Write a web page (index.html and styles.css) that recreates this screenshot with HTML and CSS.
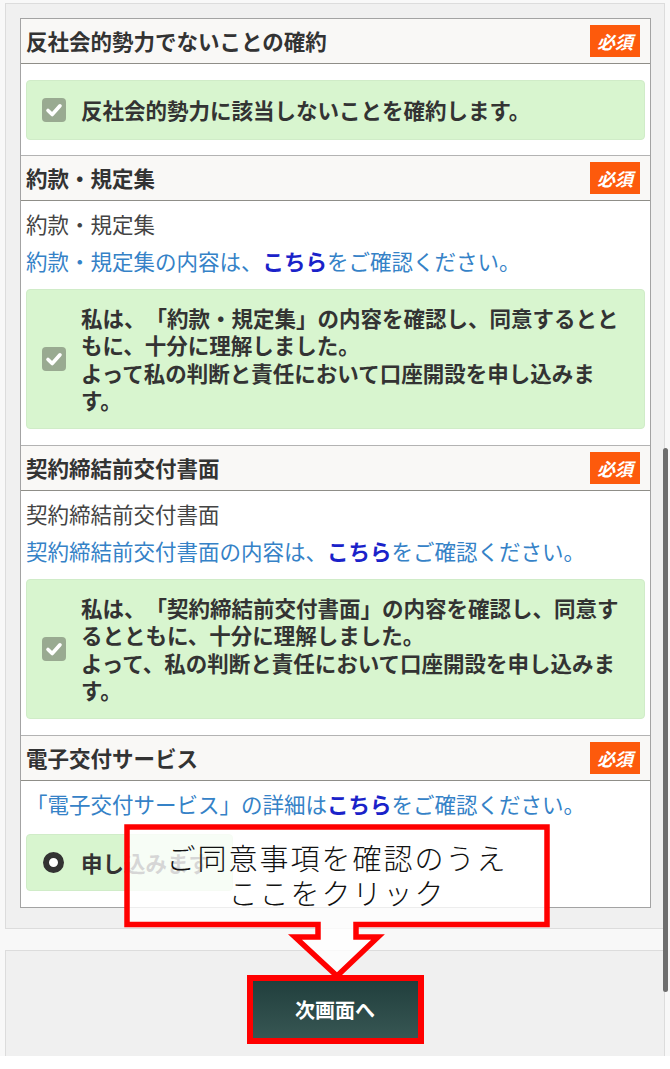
FILE: index.html
```html
<!DOCTYPE html>
<html lang="ja">
<head>
    <meta charset="UTF-8">
    <title>口座開設 確認事項</title>
    <link rel="stylesheet" href="styles.css">
</head>
<body>
<div class="page">
    <div class="container">
        <div class="panel">
            <!-- 反社会的勢力 -->
            <section class="item">
                <div class="item-head"><h2>反社会的勢力でないことの確約</h2><span class="req">必須</span></div>
                <div class="item-body first">
                    <label class="agree">
                        <span class="check"><svg width="24" height="24" viewBox="0 0 24 24"><path d="M6 12.5 L10.2 16.5 L18 7.8" fill="none" stroke="#fff" stroke-width="3.6" stroke-linecap="round" stroke-linejoin="round"/></svg></span>
                        <span class="agree-text">反社会的勢力に該当しないことを確約します。</span>
                    </label>
                </div>
            </section>

            <!-- 約款・規定集 -->
            <section class="item">
                <div class="item-head"><h2>約款・規定集</h2><span class="req">必須</span></div>
                <div class="item-body">
                    <p class="note">約款・規定集</p>
                    <p class="link-line">約款・規定集の内容は、<a class="here" href="#">こちら</a>をご確認ください。</p>
                    <label class="agree">
                        <span class="check"><svg width="24" height="24" viewBox="0 0 24 24"><path d="M6 12.5 L10.2 16.5 L18 7.8" fill="none" stroke="#fff" stroke-width="3.6" stroke-linecap="round" stroke-linejoin="round"/></svg></span>
                        <span class="agree-text">私は、「約款・規定集」の内容を確認し、同意するとともに、十分に理解しました。<br>よって私の判断と責任において口座開設を申し込みます。</span>
                    </label>
                </div>
            </section>

            <!-- 契約締結前交付書面 -->
            <section class="item">
                <div class="item-head"><h2>契約締結前交付書面</h2><span class="req">必須</span></div>
                <div class="item-body">
                    <p class="note">契約締結前交付書面</p>
                    <p class="link-line">契約締結前交付書面の内容は、<a class="here" href="#">こちら</a>をご確認ください。</p>
                    <label class="agree">
                        <span class="check"><svg width="24" height="24" viewBox="0 0 24 24"><path d="M6 12.5 L10.2 16.5 L18 7.8" fill="none" stroke="#fff" stroke-width="3.6" stroke-linecap="round" stroke-linejoin="round"/></svg></span>
                        <span class="agree-text">私は、「契約締結前交付書面」の内容を確認し、同意するとともに、十分に理解しました。<br>よって、私の判断と責任において口座開設を申し込みます。</span>
                    </label>
                </div>
            </section>

            <!-- 電子交付サービス -->
            <section class="item">
                <div class="item-head"><h2>電子交付サービス</h2><span class="req">必須</span></div>
                <div class="item-body last">
                    <p class="link-line top">「電子交付サービス」の詳細は<a class="here" href="#">こちら</a>をご確認ください。</p>
                    <label class="apply">
                        <span class="radio"></span>
                        <span class="agree-text">申し込みます</span>
                    </label>
                </div>
            </section>
        </div>
    </div>

    <div class="footer">
        <a class="next-btn" href="#">次画面へ</a>
    </div>

    <!-- 注釈の吹き出し -->
    <div class="callout">
        <svg class="callout-shape" width="430" height="160" viewBox="0 0 430 160">
            <path d="M5 5 H425 V102.5 H234 V115 H256 L215 154 L173 115 H196 V102.5 H5 Z" fill="rgba(255,255,255,0.8)" stroke="#f00" stroke-width="5.5"/>
        </svg>
        <div class="callout-text">ご同意事項を確認のうえ<br>ここをクリック</div>
    </div>

    <div class="scroll-thumb"></div>
</div>
</body>
</html>
```

FILE: styles.css
```css
body,h2,p {margin:0;padding:0;}
body {background:#fff;font-family:"Noto Sans CJK JP","Noto Sans",sans-serif;color:#333;text-spacing-trim:space-all;}

.page {position:relative;background:#f8f8f8;padding:3px 5px 0;}
.container {border:1px solid #dcdcdc;background:#f0f0f0;padding:14px 13px 20px 14px;}
.panel {border:1px solid #a3a3a3;background:#fff;}

.item + .item {border-top:1px solid #b3b3b3;}
.item-head {display:flex;align-items:center;justify-content:space-between;height:44px;padding:0 10px 0 5px;background:#f9f8f6;border-bottom:1px solid #8f8e88;}
.item-head h2 {font-size:21.5px;font-weight:bold;color:#333;line-height:30px;}
.req {display:flex;align-items:center;justify-content:center;width:50px;height:32px;background:#fd5a0c;color:#fff;font-size:18px;font-weight:bold;font-style:italic;}

.item-body {padding:8px 5px 16px;}
.item-body.first {padding:16px 5px 15px;}
.item-body.last {padding:8px 5px 16px;}

.note {font-size:21.5px;line-height:30px;color:#444;}
.link-line {margin-top:7px;font-size:21.5px;line-height:30px;color:#3582c7;}
.link-line.top {margin-top:0;}
.here {color:#1a22c9;font-weight:bold;text-decoration:none;}

.agree {display:flex;align-items:center;margin-top:13px;padding:14px 20px 14px 15px;background:#d8f5cf;border:1px solid #d0ecc8;border-radius:4px;}
.first .agree {margin-top:0;padding:15px 20px 15px 15px;}
.agree-text {font-size:21.5px;line-height:27.5px;font-weight:bold;color:#333;}
.check {flex:none;width:24px;height:24px;margin-right:15px;border-radius:4px;background:#99aa91;}
.check svg {display:block;}

.apply {display:flex;align-items:center;width:fit-content;margin-top:15px;padding:14px 22px 14px 15px;background:#d8f5cf;border:1px solid #d0ecc8;border-radius:4px;}
.radio {flex:none;box-sizing:border-box;width:21px;height:21px;margin:0 17px 0 1px;border:6px solid #333;border-radius:50%;background:#fff;}

.footer {display:flex;justify-content:center;margin-top:21px;padding:30px 0 18px;border:1px solid #dcdcdc;border-bottom:none;background:#f0f0f0;}
.next-btn {display:block;width:165px;height:57px;line-height:57px;text-align:center;background:linear-gradient(#213f3d,#375653);color:#fff;font-size:20px;font-weight:bold;text-decoration:none;outline:6px solid #f00;}

/* 注釈（画面上に重ねた吹き出し） */
.callout {position:absolute;left:122px;top:822px;width:430px;height:160px;}
.callout-shape {position:absolute;left:0;top:0;}
.callout-text {position:relative;padding-top:18px;text-align:center;font-size:29px;line-height:35px;letter-spacing:2px;font-weight:300;color:#111;}

.scroll-thumb {position:absolute;left:663px;top:448px;width:5px;height:544px;background:#6e6e6e;border-radius:3px;}
```
